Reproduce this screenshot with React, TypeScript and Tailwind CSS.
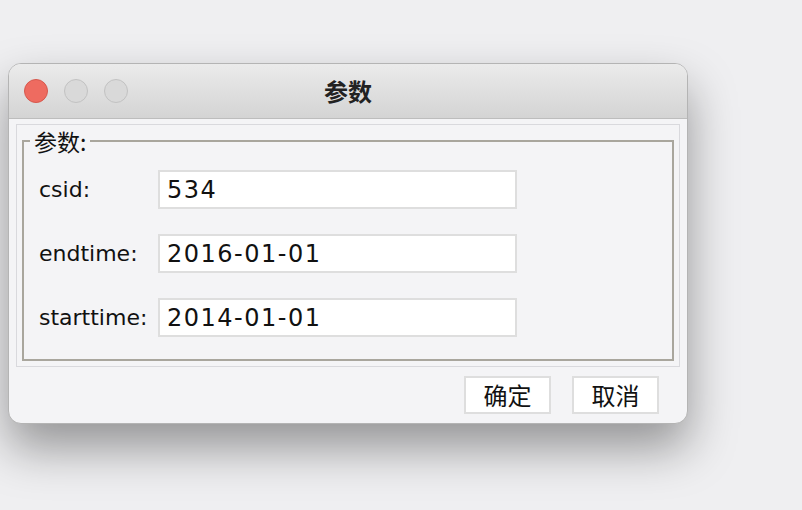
const fields = [
  { label: "csid:", value: "534" },
  { label: "endtime:", value: "2016-01-01" },
  { label: "starttime:", value: "2014-01-01" },
];

function TrafficLight({ color }: { color: "red" | "gray" }) {
  return (
    <span
      className={
        color === "red"
          ? "h-[24px] w-[24px] rounded-full border border-[#d6584d] bg-[#ee6b60]"
          : "h-[24px] w-[24px] rounded-full border border-[#c2c2c2] bg-[#d9d9d9]"
      }
    />
  );
}

export default function App() {
  return (
    <div className="min-h-[510px] w-[802px] bg-[#efeff1] pl-[8px] pt-[63px] font-['DejaVu_Sans','Noto_Sans_CJK_SC',sans-serif] text-[#111]">
      <div className="flex h-[361px] w-[680px] flex-col overflow-hidden rounded-[13px] border border-[#b4b4b4] bg-[#f4f4f6] shadow-[0_24px_48px_rgba(0,0,0,0.38)]">
        <div className="grid h-[55px] shrink-0 grid-cols-[1fr_auto_1fr] items-center border-b border-[#bdbdbd] bg-gradient-to-b from-[#ebebeb] to-[#d4d4d4]">
          <div className="flex gap-[16px] pl-[15px]">
            <TrafficLight color="red" />
            <TrafficLight color="gray" />
            <TrafficLight color="gray" />
          </div>
          <h1 className="font-['Noto_Sans_CJK_SC',sans-serif] text-[24px] font-bold text-[#222]">
            参数
          </h1>
          <div />
        </div>

        <div className="mx-[7px] mt-[5px] h-[243px] border border-[#d9d9dd] px-[5px] pb-[5px] pt-[4px]">
          <fieldset className="h-[232px] border-2 border-[#a9a69d]">
            <legend className="ml-[6px] px-[4px] font-['Noto_Sans_CJK_SC',sans-serif] text-[23px] leading-[24px]">
              参数:
            </legend>
            <div className="flex flex-col gap-[25px] pl-[15px] pt-[17px]">
              {fields.map((field) => (
                <div key={field.label} className="flex items-center">
                  <label className="w-[119px] text-[22px] leading-[26px]">
                    {field.label}
                  </label>
                  <input
                    type="text"
                    defaultValue={field.value}
                    className="h-[39px] w-[359px] border-2 border-[#dedede] bg-white px-[7px] text-[24px] tracking-[1.5px] outline-none"
                  />
                </div>
              ))}
            </div>
          </fieldset>
        </div>

        <div className="flex justify-end gap-[21px] pr-[28px] pt-[9px]">
          <button
            type="button"
            className="h-[38px] w-[87px] border-2 border-[#dedede] bg-white font-['Noto_Sans_CJK_SC',sans-serif] text-[24px] leading-none"
          >
            确定
          </button>
          <button
            type="button"
            className="h-[38px] w-[87px] border-2 border-[#dedede] bg-white font-['Noto_Sans_CJK_SC',sans-serif] text-[24px] leading-none"
          >
            取消
          </button>
        </div>
      </div>
    </div>
  );
}
